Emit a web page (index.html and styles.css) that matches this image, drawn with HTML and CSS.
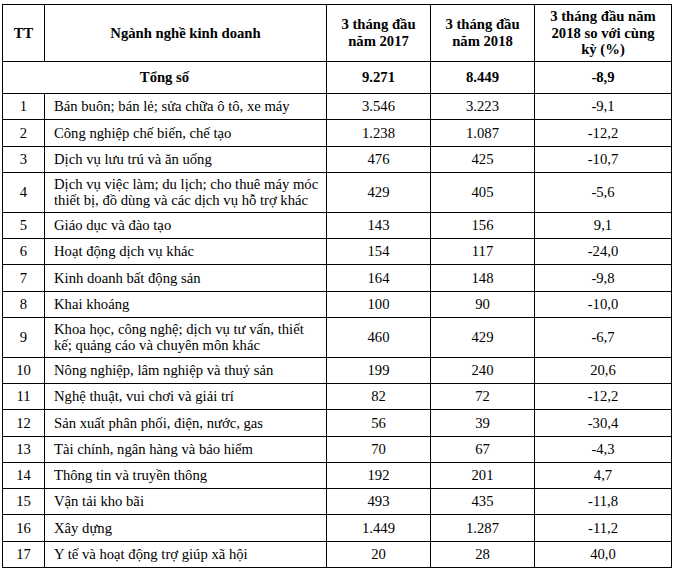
FILE: index.html
```html
<!DOCTYPE html>
<html lang="vi">
<head>
<meta charset="utf-8">
<title>Bảng</title>
<link rel="stylesheet" href="styles.css">
</head>
<body>
<div class="wrap">
<table class="tbl">
<colgroup>
<col class="c1"><col class="c2"><col class="c3"><col class="c4"><col class="c5">
</colgroup>
<thead>
<tr class="head">
<th>TT</th>
<th>Ngành nghề kinh doanh</th>
<th>3 tháng đầu<br>năm 2017</th>
<th>3 tháng đầu<br>năm 2018</th>
<th>3 tháng đầu năm<br>2018 so với cùng<br>kỳ (%)</th>
</tr>
</thead>
<tbody>
<tr class="total">
<th colspan="2">Tổng số</th>
<th>9.271</th>
<th>8.449</th>
<th>-8,9</th>
</tr>
<tr class="r"><td>1</td><td class="name">Bán buôn; bán lẻ; sửa chữa ô tô, xe máy</td><td>3.546</td><td>3.223</td><td>-9,1</td></tr>
<tr class="r"><td>2</td><td class="name">Công nghiệp chế biến, chế tạo</td><td>1.238</td><td>1.087</td><td>-12,2</td></tr>
<tr class="r"><td>3</td><td class="name">Dịch vụ lưu trú và ăn uống</td><td>476</td><td>425</td><td>-10,7</td></tr>
<tr class="r2"><td>4</td><td class="name">Dịch vụ việc làm; du lịch; cho thuê máy móc<br>thiết bị, đồ dùng và các dịch vụ hỗ trợ khác</td><td>429</td><td>405</td><td>-5,6</td></tr>
<tr class="r"><td>5</td><td class="name">Giáo dục và đào tạo</td><td>143</td><td>156</td><td>9,1</td></tr>
<tr class="r"><td>6</td><td class="name">Hoạt động dịch vụ khác</td><td>154</td><td>117</td><td>-24,0</td></tr>
<tr class="r"><td>7</td><td class="name">Kinh doanh bất động sản</td><td>164</td><td>148</td><td>-9,8</td></tr>
<tr class="r"><td>8</td><td class="name">Khai khoáng</td><td>100</td><td>90</td><td>-10,0</td></tr>
<tr class="r2"><td>9</td><td class="name">Khoa học, công nghệ; dịch vụ tư vấn, thiết<br>kế; quảng cáo và chuyên môn khác</td><td>460</td><td>429</td><td>-6,7</td></tr>
<tr class="r"><td>10</td><td class="name">Nông nghiệp, lâm nghiệp và thuỷ sản</td><td>199</td><td>240</td><td>20,6</td></tr>
<tr class="r"><td>11</td><td class="name">Nghệ thuật, vui chơi và giải trí</td><td>82</td><td>72</td><td>-12,2</td></tr>
<tr class="r"><td>12</td><td class="name">Sản xuất phân phối, điện, nước, gas</td><td>56</td><td>39</td><td>-30,4</td></tr>
<tr class="r"><td>13</td><td class="name">Tài chính, ngân hàng và bảo hiểm</td><td>70</td><td>67</td><td>-4,3</td></tr>
<tr class="r"><td>14</td><td class="name">Thông tin và truyền thông</td><td>192</td><td>201</td><td>4,7</td></tr>
<tr class="r"><td>15</td><td class="name">Vận tải kho bãi</td><td>493</td><td>435</td><td>-11,8</td></tr>
<tr class="r"><td>16</td><td class="name">Xây dựng</td><td>1.449</td><td>1.287</td><td>-11,2</td></tr>
<tr class="r"><td>17</td><td class="name">Y tế và hoạt động trợ giúp xã hội</td><td>20</td><td>28</td><td>40,0</td></tr>
</tbody>
</table>
</div>
</body>
</html>
```
FILE: styles.css
```css
html, body {
  margin: 0;
  padding: 0;
  background: #ffffff;
}
.wrap {
  padding: 4px 0 0 2px;
}
.tbl {
  border-collapse: collapse;
  table-layout: fixed;
  width: 669px;
  font-family: "Liberation Serif", "Times New Roman", serif;
  font-size: 14.67px;
  line-height: 16.7px;
  color: #000000;
}
.c1 { width: 42px; }
.c2 { width: 282px; }
.c3 { width: 104px; }
.c4 { width: 104px; }
.c5 { width: 137px; }
.tbl th, .tbl td {
  border: 1px solid #000000;
  padding: 0 2px;
  text-align: center;
  vertical-align: middle;
  font-weight: normal;
  white-space: nowrap;
}
.tbl th {
  font-weight: bold;
}
.head th { height: 57px; box-sizing: border-box; }
.total th { height: 32px; box-sizing: border-box; }
.r td { height: 26.25px; box-sizing: border-box; }
.r2 td { height: 40px; box-sizing: border-box; }
.tbl td.name {
  text-align: left;
  padding-left: 9px;
  padding-right: 2px;
}
```
